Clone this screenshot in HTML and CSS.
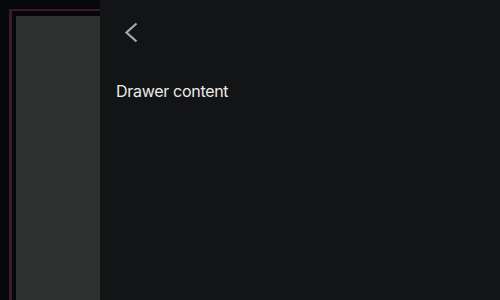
FILE: index.html
```html
<!DOCTYPE html>
<html>
<head>
<meta charset="utf-8">
<link rel="stylesheet" href="styles.css">
</head>
<body>
<div class="page">
  <div class="frame">
    <div class="panel"></div>
  </div>
</div>
<aside class="drawer">
  <div class="drawer-header">
    <button class="back" aria-label="Back">
      <svg width="32" height="32" viewBox="0 0 32 32" fill="none">
        <path d="M20.5 7.5 L10.5 16.5 L20.5 25.5" stroke="#a9aaab" stroke-width="2.2" stroke-linecap="butt" stroke-linejoin="miter"/>
      </svg>
    </button>
  </div>
  <div class="drawer-body">Drawer content</div>
</aside>
</body>
</html>
```
FILE: styles.css
```css
html, body {
  margin: 0;
  height: 100%;
  background: #060708;
  overflow: hidden;
  font-family: Inter, "Liberation Sans", sans-serif;
}
.page {
  padding: 9px 0 0 9px;
  height: 100%;
  box-sizing: border-box;
}
.frame {
  border-top: 2px solid #3b1a2a;
  border-left: 3px solid #3b1a2a;
  padding: 5px 0 0 4px;
  height: 100%;
  box-sizing: border-box;
}
.panel {
  background: #2f3030;
  height: 100%;
}
.drawer {
  position: fixed;
  top: 0;
  left: 100px;
  right: 0;
  bottom: 0;
  background: #131415;
  padding: 16px;
  box-sizing: border-box;
  display: flex;
  flex-direction: column;
}
.drawer-header {
  display: flex;
  height: 32px;
}
.back {
  width: 32px;
  height: 32px;
  padding: 0;
  border: 0;
  background: none;
  display: flex;
  align-items: center;
  justify-content: center;
}
.drawer-body {
  margin-top: 31px;
  color: #ebebeb;
  font-size: 16px;
  line-height: 24px;
  letter-spacing: -0.3px;
}
```
